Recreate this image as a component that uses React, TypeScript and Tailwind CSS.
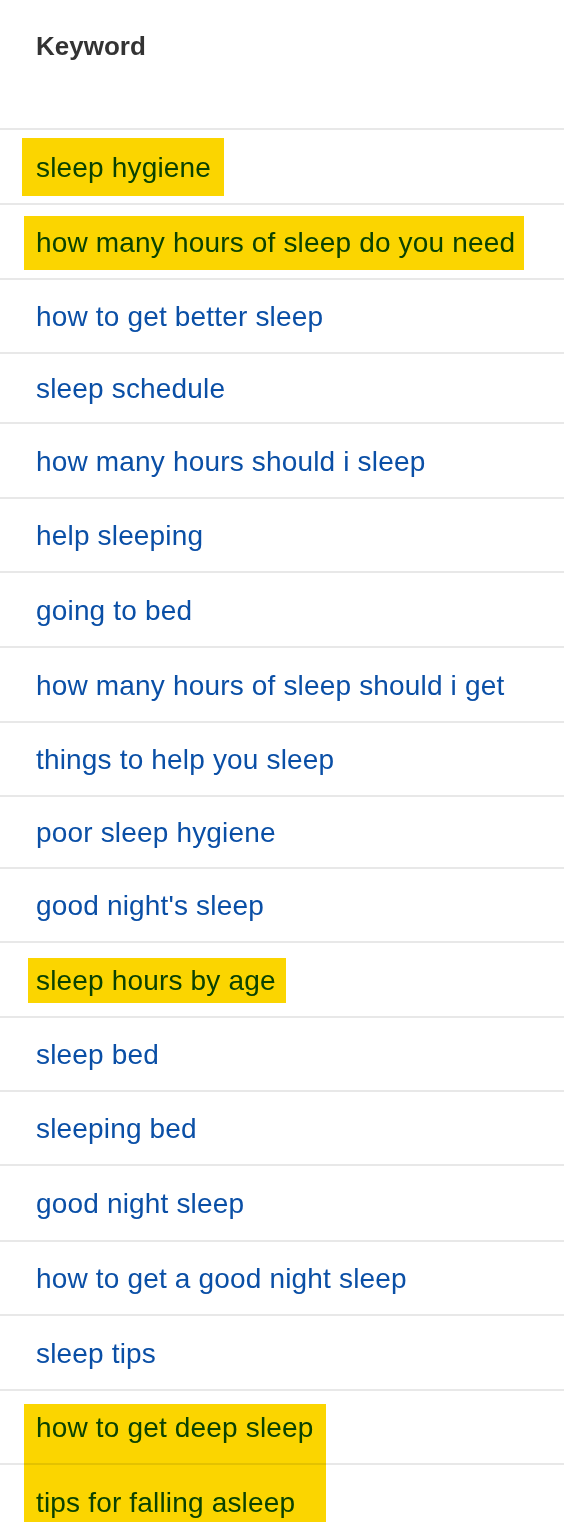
const ROWS = [
  { text: "sleep hygiene", h: "h-[75px]" },
  { text: "how many hours of sleep do you need", h: "h-[75px]" },
  { text: "how to get better sleep", h: "h-[74px]" },
  { text: "sleep schedule", h: "h-[70px]" },
  { text: "how many hours should i sleep", h: "h-[75px]" },
  { text: "help sleeping", h: "h-[74px]" },
  { text: "going to bed", h: "h-[75px]" },
  { text: "how many hours of sleep should i get", h: "h-[75px]" },
  { text: "things to help you sleep", h: "h-[74px]" },
  { text: "poor sleep hygiene", h: "h-[72px]" },
  { text: "good night's sleep", h: "h-[74px]" },
  { text: "sleep hours by age", h: "h-[75px]" },
  { text: "sleep bed", h: "h-[74px]" },
  { text: "sleeping bed", h: "h-[74px]" },
  { text: "good night sleep", h: "h-[76px]" },
  { text: "how to get a good night sleep", h: "h-[74px]" },
  { text: "sleep tips", h: "h-[75px]" },
  { text: "how to get deep sleep", h: "h-[74px]" },
  { text: "tips for falling asleep", h: "h-[75px]" },
]

export default function App() {
  return (
    <div className="relative w-[564px] min-h-[1534px] bg-white font-['Liberation_Sans',Arial,sans-serif] overflow-hidden">
      {/* Header */}
      <div className="h-[128px] pl-9 pt-[31px]">
        <span className="text-[26px] font-bold text-[#333333] leading-[30px]">Keyword</span>
      </div>

      {/* Rows */}
      <div>
        {ROWS.map((row) => (
          <div
            key={row.text}
            className={`${row.h} flex items-center border-t-2 border-[#e8e8e8] pl-9 pt-[2px]`}
          >
            <span className="text-[28px] leading-none tracking-[0.17px] text-[#0a4fa6]">{row.text}</span>
          </div>
        ))}
      </div>

      {/* Highlighter marks */}
      <div className="pointer-events-none absolute left-[22px] top-[138px] h-[58px] w-[202px] bg-[#fbd500] mix-blend-multiply" />
      <div className="pointer-events-none absolute left-[24px] top-[216px] h-[54px] w-[500px] bg-[#fbd500] mix-blend-multiply" />
      <div className="pointer-events-none absolute left-[28px] top-[958px] h-[45px] w-[258px] bg-[#fbd500] mix-blend-multiply" />
      <div className="pointer-events-none absolute left-[24px] top-[1404px] h-[118px] w-[302px] bg-[#fbd500] mix-blend-multiply" />
    </div>
  )
}
